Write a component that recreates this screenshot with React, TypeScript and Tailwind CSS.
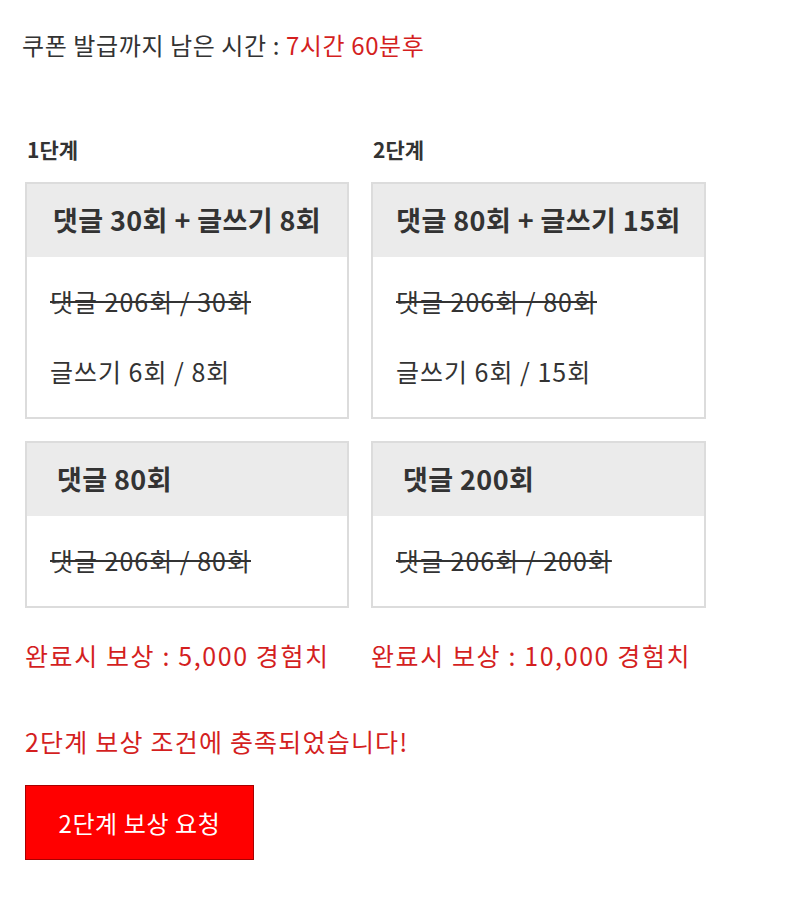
const font = { fontFamily: '"Noto Sans CJK KR", "Noto Sans", sans-serif' };

function Box({
  title,
  lines,
  width,
  center,
}: {
  title: string;
  lines: string[];
  width: string;
  center?: boolean;
}) {
  return (
    <div className={`${width} border-2 border-[#dcdcdc] bg-white`}>
      <div
        className={`flex h-[73px] items-center bg-[#ebebeb] text-[27px] font-bold tracking-[0.4px] text-[#333] ${
          center ? 'justify-center' : 'pl-[30px]'
        }`}
      >
        {title}
      </div>
      <div className="py-[10px]">
        {lines.map((l, i) => (
          <div
            key={i}
            className={`flex h-[70px] items-center pl-[23px] text-[25px] tracking-[1px] text-[#333] ${
              i === 0 ? 'line-through decoration-[#333]' : ''
            }`}
          >
            {l}
          </div>
        ))}
      </div>
    </div>
  );
}

export default function App() {
  return (
    <div className="min-h-screen bg-white px-[25px] pt-[27px]" style={font}>
      <p className="-ml-[3px] text-[24px] leading-[36px] tracking-[0.6px] text-[#333]">
        쿠폰 발급까지 남은 시간 : <span className="text-[#d41f1f]">7시간 60분후</span>
      </p>

      <div className="mt-[71px] flex gap-[22px]">
        <div className="flex flex-col">
          <div className="mb-[18px] pl-[2px] text-[21px] font-bold leading-[30px] text-[#333]">1단계</div>
          <Box
            width="w-[324px]"
            center
            title="댓글 30회 + 글쓰기 8회"
            lines={['댓글 206회 / 30회', '글쓰기 6회 / 8회']}
          />
          <div className="mt-[22px]">
            <Box width="w-[324px]" title="댓글 80회" lines={['댓글 206회 / 80회']} />
          </div>
          <div className="mt-[30px] text-[25px] leading-[34px] tracking-[1.6px] text-[#d41f1f]">
            완료시 보상 : 5,000 경험치
          </div>
        </div>
        <div className="flex flex-col">
          <div className="mb-[18px] pl-[2px] text-[21px] font-bold leading-[30px] text-[#333]">2단계</div>
          <Box
            width="w-[335px]"
            center
            title="댓글 80회 + 글쓰기 15회"
            lines={['댓글 206회 / 80회', '글쓰기 6회 / 15회']}
          />
          <div className="mt-[22px]">
            <Box width="w-[335px]" title="댓글 200회" lines={['댓글 206회 / 200회']} />
          </div>
          <div className="mt-[30px] text-[25px] leading-[34px] tracking-[1.6px] text-[#d41f1f]">
            완료시 보상 : 10,000 경험치
          </div>
        </div>
      </div>

      <p className="mt-[52px] text-[25px] leading-[34px] tracking-[1.2px] text-[#d41f1f]">
        2단계 보상 조건에 충족되었습니다!
      </p>

      <button
        className="mt-[27px] flex h-[75px] w-[229px] items-center justify-center border border-[#a80000] bg-[#ff0000] text-[24px] tracking-[0.6px] text-white"
        style={font}
      >
        2단계 보상 요청
      </button>
    </div>
  );
}
